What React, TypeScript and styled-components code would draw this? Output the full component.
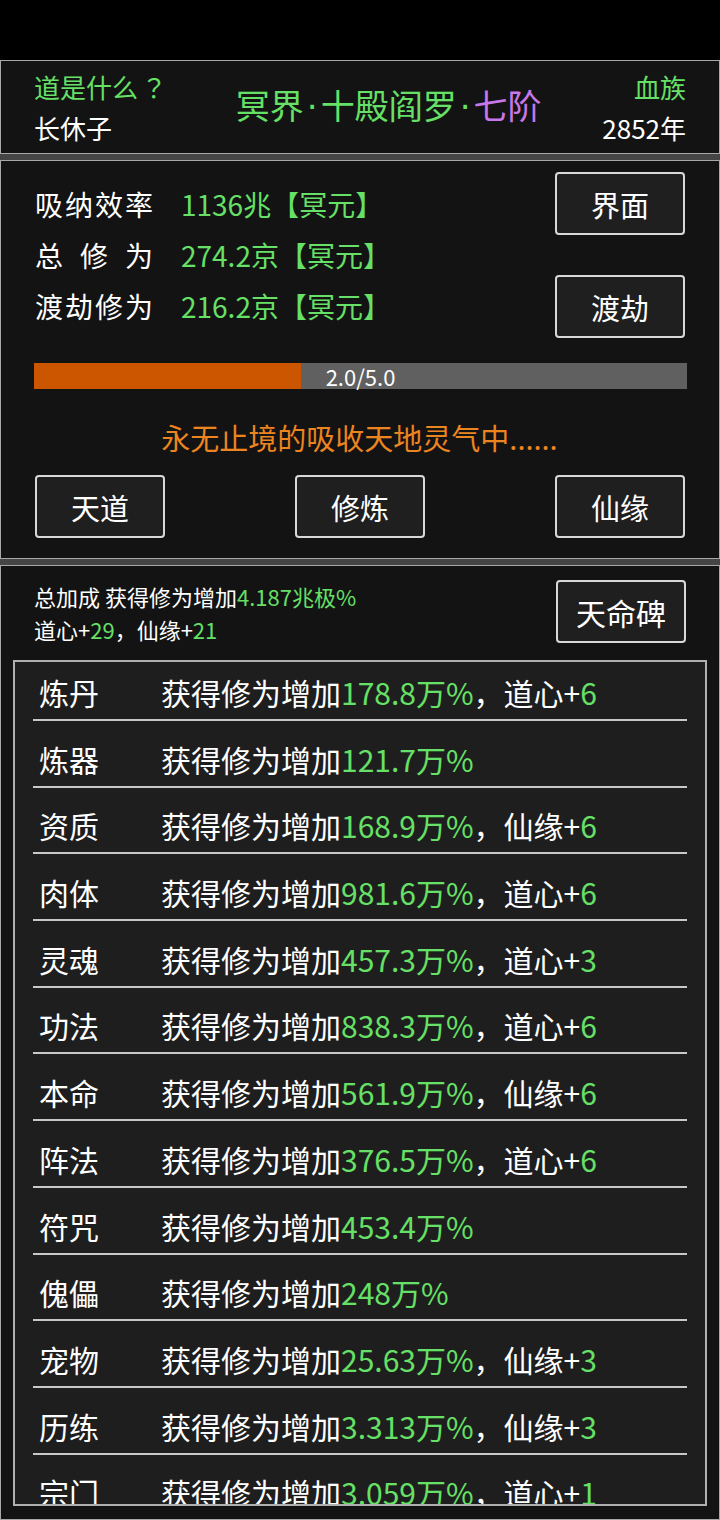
import React from "react";
import styled, { createGlobalStyle } from "styled-components";

const GlobalStyle = createGlobalStyle`
  html, body { margin: 0; padding: 0; background: #000; }
  body { font-family: "Noto Sans CJK SC", "Noto Sans", sans-serif; color: #fff; }
  * { box-sizing: border-box; }
`;

const GREEN = "#66e066";
const PURPLE = "#c877ea";
const ORANGE = "#ec8420";

const Page = styled.div`
  width: 720px;
  height: 1520px;
  overflow: hidden;
  background: #000;
  display: flex;
  flex-direction: column;
`;

const StatusSpace = styled.div`
  height: 60px;
  flex: none;
  background: #000;
`;

const Stack = styled.div`
  flex: 1;
  display: flex;
  flex-direction: column;
  gap: 6px;
  background: #454545;
  min-height: 0;
`;

const Panel = styled.section`
  flex: none;
  background: #131313;
  border: 1px solid #a8a8a8;
`;

const HeaderPanel = styled(Panel)`
  height: 94px;
  display: flex;
  align-items: center;
  padding: 0 33px 0 33px;
`;

const SideCol = styled.div<{ $right?: boolean }>`
  display: flex;
  flex-direction: column;
  align-items: ${(p) => (p.$right ? "flex-end" : "flex-start")};
  font-size: 26px;
  line-height: 41px;
`;

const Txt = styled.span<{ $c?: string }>`
  color: ${(p) => p.$c || "#fff"};
`;

const CenteredPunct = styled.span`
  font-family: "Noto Sans CJK JP", "Noto Sans CJK SC", sans-serif;
  margin-left: 3px;
`;

const Title = styled.div`
  flex: 1;
  text-align: center;
  font-size: 34px;
  line-height: 44px;
  color: ${GREEN};
  padding-bottom: 2px;
  padding-left: 8px;
`;

const Dot = styled.span`
  font-family: "DejaVu Sans", sans-serif;
  margin: 0 3px;
`;

const StatsPanel = styled(Panel)`
  height: 399px;
  padding: 11px 34px 0 33px;
  display: flex;
  flex-direction: column;
`;

const StatsTop = styled.div`
  display: flex;
  justify-content: space-between;
  align-items: center;
`;

const StatList = styled.div`
  display: flex;
  flex-direction: column;
  padding-left: 1px;
`;

const StatRow = styled.div`
  display: flex;
  align-items: center;
  height: 51px;
  font-size: 28px;
`;

const StatLabel = styled.div`
  width: 118px;
  display: flex;
  justify-content: space-between;
  margin-right: 28px;
  color: #fff;
`;

const StatValue = styled.div`
  color: ${GREEN};
`;

const ButtonCol = styled.div`
  display: flex;
  flex-direction: column;
  justify-content: space-between;
  height: 166px;
`;

const Btn = styled.div<{ $size?: number }>`
  width: 130px;
  height: 63px;
  border: 2px solid #d8d8d8;
  border-radius: 4px;
  background: #1f1f1f;
  color: #fff;
  font-size: ${(p) => p.$size || 29}px;
  display: flex;
  align-items: center;
  justify-content: center;
  flex: none;
`;

const Bar = styled.div`
  margin-top: 25px;
  height: 26px;
  background: #606060;
  position: relative;
  width: 653px;
`;

const BarFill = styled.div`
  height: 100%;
  background: #cc5500;
`;

const BarText = styled.div`
  position: absolute;
  inset: 0;
  display: flex;
  align-items: center;
  justify-content: center;
  font-size: 22px;
  color: #fff;
  line-height: 26px;
`;

const StatusLine = styled.div`
  margin-top: 28px;
  text-align: center;
  font-size: 29px;
  line-height: 40px;
  color: ${ORANGE};
`;

const ActionRow = styled.div`
  margin-top: 18px;
  display: flex;
  justify-content: space-between;
  padding: 0 0 0 1px;
`;

const BonusPanel = styled.section`
  flex: 1;
  background: #131313;
  border: 1px solid #a8a8a8;
  padding: 14px 12px 11px 12px;
  display: flex;
  flex-direction: column;
  overflow: hidden;
`;

const BonusTop = styled.div`
  display: flex;
  justify-content: space-between;
  align-items: flex-start;
  padding: 0 21px 0 21px;
`;

const BonusText = styled.div`
  font-size: 22px;
  line-height: 33px;
`;

const ListBox = styled.div`
  margin-top: 14px;
  height: 846px;
  flex: none;
  border: 2px solid #b0b0b0;
  background: #1e1e1e;
  padding: 0 18px;
  overflow: hidden;
`;

const Row = styled.div<{ $first?: boolean }>`
  display: flex;
  align-items: center;
  padding-top: ${(p) => (p.$first ? 5 : 12.7)}px;
  padding-bottom: 2px;
  border-bottom: 2px solid #c8c8c8;
  font-size: 30px;
  flex: none;
`;

const RowLine = styled.div`
  height: 50px;
  display: flex;
  align-items: center;
  white-space: nowrap;
`;

const RowName = styled.div`
  width: 128px;
  padding-left: 6px;
  flex: none;
`;

const RowDesc = styled.div``;

type Item = { name: string; amt: string; extra?: [string, string] };

const items: Item[] = [
  { name: "炼丹", amt: "178.8万%", extra: ["道心", "6"] },
  { name: "炼器", amt: "121.7万%" },
  { name: "资质", amt: "168.9万%", extra: ["仙缘", "6"] },
  { name: "肉体", amt: "981.6万%", extra: ["道心", "6"] },
  { name: "灵魂", amt: "457.3万%", extra: ["道心", "3"] },
  { name: "功法", amt: "838.3万%", extra: ["道心", "6"] },
  { name: "本命", amt: "561.9万%", extra: ["仙缘", "6"] },
  { name: "阵法", amt: "376.5万%", extra: ["道心", "6"] },
  { name: "符咒", amt: "453.4万%" },
  { name: "傀儡", amt: "248万%" },
  { name: "宠物", amt: "25.63万%", extra: ["仙缘", "3"] },
  { name: "历练", amt: "3.313万%", extra: ["仙缘", "3"] },
  { name: "宗门", amt: "3.059万%", extra: ["道心", "1"] },
];

const stats = [
  { label: "吸纳效率", value: "1136兆【冥元】" },
  { label: "总修为", value: "274.2京【冥元】" },
  { label: "渡劫修为", value: "216.2京【冥元】" },
];

export default function App() {
  return (
    <Page>
      <GlobalStyle />
      <StatusSpace />
      <Stack>
        <HeaderPanel>
          <SideCol>
            <Txt $c={GREEN}>
              道是什么<CenteredPunct>？</CenteredPunct>
            </Txt>
            <Txt>长休子</Txt>
          </SideCol>
          <Title>
            冥界<Dot>·</Dot>十殿阎罗<Dot>·</Dot>
            <Txt $c={PURPLE}>七阶</Txt>
          </Title>
          <SideCol $right>
            <Txt $c={GREEN}>血族</Txt>
            <Txt>2852年</Txt>
          </SideCol>
        </HeaderPanel>

        <StatsPanel>
          <StatsTop>
            <StatList>
              {stats.map((s) => (
                <StatRow key={s.label}>
                  <StatLabel>
                    {s.label.split("").map((c, i) => (
                      <span key={i}>{c}</span>
                    ))}
                  </StatLabel>
                  <StatValue>{s.value}</StatValue>
                </StatRow>
              ))}
            </StatList>
            <ButtonCol>
              <Btn>界面</Btn>
              <Btn>渡劫</Btn>
            </ButtonCol>
          </StatsTop>
          <Bar>
            <BarFill style={{ width: `${(267 / 653) * 100}%` }} />
            <BarText>2.0/5.0</BarText>
          </Bar>
          <StatusLine>永无止境的吸收天地灵气中......</StatusLine>
          <ActionRow>
            <Btn>天道</Btn>
            <Btn>修炼</Btn>
            <Btn>仙缘</Btn>
          </ActionRow>
        </StatsPanel>

        <BonusPanel>
          <BonusTop>
            <BonusText>
              <div>
                总加成 获得修为增加<Txt $c={GREEN}>4.187兆极%</Txt>
              </div>
              <div>
                道心+<Txt $c={GREEN}>29</Txt>，仙缘+<Txt $c={GREEN}>21</Txt>
              </div>
            </BonusText>
            <Btn $size={30}>天命碑</Btn>
          </BonusTop>
          <ListBox>
            {items.map((it, i) => (
              <Row key={it.name} $first={i === 0}>
                <RowLine>
                  <RowName>{it.name}</RowName>
                  <RowDesc>
                    获得修为增加<Txt $c={GREEN}>{it.amt}</Txt>
                    {it.extra && (
                      <>
                        ，{it.extra[0]}+<Txt $c={GREEN}>{it.extra[1]}</Txt>
                      </>
                    )}
                  </RowDesc>
                </RowLine>
              </Row>
            ))}
          </ListBox>
        </BonusPanel>
      </Stack>
    </Page>
  );
}
